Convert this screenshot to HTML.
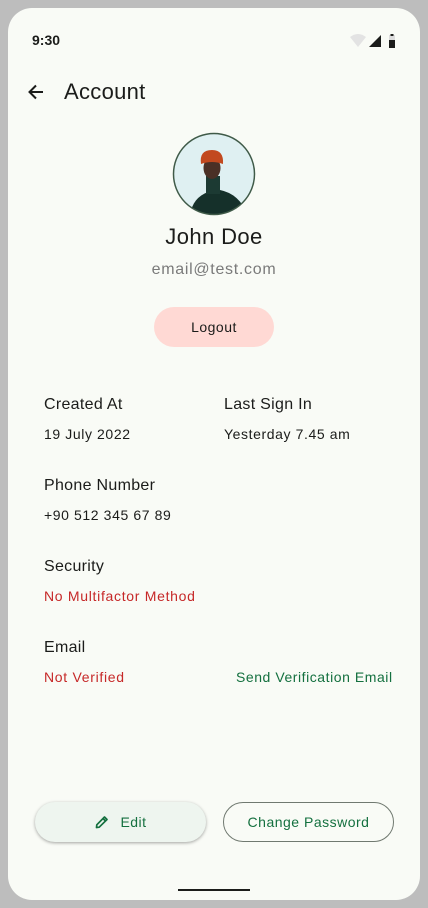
<!DOCTYPE html>
<html><head><meta charset="utf-8"><style>
*{margin:0;padding:0;box-sizing:border-box}
body{width:428px;height:908px;background:#bdbdbd;font-family:"Liberation Sans",sans-serif;position:relative;overflow:hidden;letter-spacing:.5px}
.scr{position:absolute;left:8px;top:8px;width:412px;height:892px;background:#f9fbf6;border-radius:24px}
.a{position:absolute}
.h{font-size:16px;color:#1b1c1a;letter-spacing:.3px}
.v{font-size:14px;color:#1b1c1a;letter-spacing:.6px}
.red{color:#c62828;font-size:14px;letter-spacing:.7px}
.grn{color:#14703f;font-size:14px;letter-spacing:.55px}
</style></head><body>
<div class="a scr"></div>
<div class="a" style="left:32px;top:32px;font-size:14px;font-weight:bold;color:#1b1c1a;letter-spacing:0">9:30</div>
<svg class="a" style="left:349px;top:34px" width="48" height="14">
<path d="M1 3 Q9 -3 17 3 L9 13Z" fill="#e3e3e3"/>
<path d="M20 13 L32 13 L32 1Z" fill="#1b1c1a"/>
<rect x="40" y="1" width="6" height="13" fill="#1b1c1a"/><rect x="40" y="1" width="6" height="5" fill="#ddd"/><rect x="41.5" y="0" width="3" height="2" fill="#1b1c1a"/>
</svg>
<svg class="a" style="left:26px;top:82px" width="20" height="20" viewBox="0 0 20 20"><path d="M17 10H4M10 3.5L3.5 10L10 16.5" stroke="#1b1c1a" stroke-width="2" fill="none"/></svg>
<div class="a" style="left:64px;top:79px;font-size:22px;color:#1b1c1a;letter-spacing:.3px">Account</div>
<svg class="a" style="left:172px;top:132px" width="84" height="84" viewBox="0 0 84 84">
<defs><clipPath id="c"><circle cx="42" cy="42" r="40.5"/></clipPath></defs>
<circle cx="42" cy="42" r="41" fill="#dff0f2"/>
<g clip-path="url(#c)">
<path d="M18 84 Q20 66 36 60 L48 58 Q68 62 76 84Z" fill="#15302a"/>
<rect x="34" y="44" width="14" height="18" fill="#1c3a33"/>
<ellipse cx="40" cy="36" rx="8.5" ry="11" fill="#4a3026"/>
<path d="M29 32 Q27 18 40 18 Q52 18 51 32 Q40 28 29 32Z" fill="#c2491f"/>
</g>
<circle cx="42" cy="42" r="40.5" fill="none" stroke="#3f5a48" stroke-width="1.5"/>
</svg>
<div class="a" style="left:0;width:428px;top:224px;text-align:center;font-size:22px;color:#1b1c1a;letter-spacing:.4px">John Doe</div>
<div class="a" style="left:0;width:428px;top:261px;text-align:center;font-size:16px;color:#7a7a7a;letter-spacing:.7px">email@test.com</div>
<div class="a" style="left:154px;top:307px;width:120px;height:40px;border-radius:20px;background:#ffd9d4;text-align:center;line-height:40px;font-size:14px;color:#1b1c1a">Logout</div>
<div class="a h" style="left:44px;top:396px">Created At</div>
<div class="a v" style="left:44px;top:426px">19 July 2022</div>
<div class="a h" style="left:224px;top:396px">Last Sign In</div>
<div class="a v" style="left:224px;top:426px">Yesterday 7.45 am</div>
<div class="a h" style="left:44px;top:477px">Phone Number</div>
<div class="a v" style="left:44px;top:507px">+90 512 345 67 89</div>
<div class="a h" style="left:44px;top:558px">Security</div>
<div class="a red" style="left:44px;top:588px">No Multifactor Method</div>
<div class="a h" style="left:44px;top:639px">Email</div>
<div class="a red" style="left:44px;top:669px">Not Verified</div>
<div class="a grn" style="left:236px;top:669px">Send Verification Email</div>
<div class="a" style="left:35px;top:802px;width:171px;height:40px;border-radius:20px;background:#eef5ef;box-shadow:0 1px 3px rgba(0,0,0,.35);text-align:center;line-height:40px;font-size:14px;color:#14703f"><svg width="16" height="16" viewBox="0 0 16 16" style="vertical-align:-3px;margin-right:10px"><path d="M2.5 13.5 L2.8 10.8 L10.5 3 L13 5.5 L5.2 13.2Z M9 4.5 L11.5 7" stroke="#14703f" stroke-width="1.7" fill="none" stroke-linejoin="round"/></svg>Edit</div>
<div class="a" style="left:223px;top:802px;width:171px;height:40px;border-radius:20px;border:1px solid #707970;text-align:center;line-height:38px;font-size:14px;color:#14703f">Change Password</div>
<div class="a" style="left:178px;top:889px;width:72px;height:2px;background:#1b1c1a"></div>
</body></html>
